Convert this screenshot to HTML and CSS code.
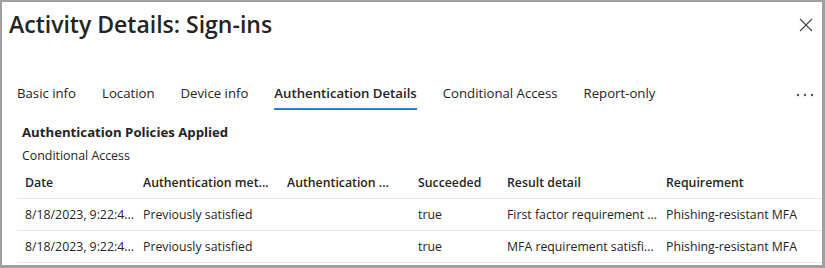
FILE: index.html
```html
<!DOCTYPE html>
<html>
<head>
<meta name="viewport" content="width=device-width, initial-scale=1">
<link rel="stylesheet" href="styles.css">
</head>
<body>
    <div class="panel">
        <div class="titleBar">
            <div class="title">Activity Details: Sign-ins</div>
            <a href="#" class="close" title="Close">
                <svg width="14" height="14" viewBox="0 0 14 14"><path d="M1 1L13 13M13 1L1 13" stroke="#444" stroke-width="1.1" fill="none"/></svg>
            </a>
        </div>
        <div class="tabs">
            <a href="#" class="tab">Basic info</a>
            <a href="#" class="tab">Location</a>
            <a href="#" class="tab">Device info</a>
            <a href="#" class="tab tabActive">Authentication Details</a>
            <a href="#" class="tab">Conditional Access</a>
            <a href="#" class="tab">Report-only</a>
            <a href="#" class="more">
                <svg width="18" height="4" viewBox="0 0 18 4"><circle cx="2" cy="2" r="1.2" fill="#555"/><circle cx="9" cy="2" r="1.2" fill="#555"/><circle cx="16" cy="2" r="1.2" fill="#555"/></svg>
            </a>
        </div>
        <div class="section">
            <div class="sectionHeading">Authentication Policies Applied</div>
            <div class="sectionSub">Conditional Access</div>
        </div>
        <table class="grid">
            <tr>
                <th class="cDate">Date</th>
                <th class="cMethod">Authentication met...</th>
                <th class="cDetail">Authentication ...</th>
                <th class="cOk">Succeeded</th>
                <th class="cResult">Result detail</th>
                <th>Requirement</th>
            </tr>
            <tr>
                <td>8/18/2023, 9:22:4...</td>
                <td>Previously satisfied</td>
                <td></td>
                <td>true</td>
                <td>First factor requirement ...</td>
                <td>Phishing-resistant MFA</td>
            </tr>
            <tr>
                <td>8/18/2023, 9:22:4...</td>
                <td>Previously satisfied</td>
                <td></td>
                <td>true</td>
                <td>MFA requirement satisfi...</td>
                <td>Phishing-resistant MFA</td>
            </tr>
        </table>
    </div>
</body>
</html>
```

FILE: styles.css
```css
html {
    margin: 0px;
    height: 100%;
}

body {
    margin: 0px;
    height: 100%;
    font-family: "Segoe UI", "Open Sans", sans-serif;
    color: #242424;
    background: #FFFFFF;
}

.panel {
    box-sizing: border-box;
    height: 268px;
    width: 825px;
    border-top: 2px solid #A0A0A0;
    border-left: 2px solid #A0A0A0;
    border-right: 3px solid #A0A0A0;
    border-bottom: 3px solid #A0A0A0;
    overflow: hidden;
}

.titleBar {
    display: flex;
    justify-content: space-between;
    align-items: flex-start;
    padding: 5px 9px 0px 7px;
    height: 47px;
}

.title {
    font-size: 23px;
    font-weight: 600;
    line-height: 34px;
}

.close {
    margin-top: 11px;
    display: block;
    line-height: 0;
}

.tabs {
    display: flex;
    align-items: flex-start;
    padding: 0px 0px 0px 15px;
    position: relative;
    margin-top: 29px;
}

.tab {
    font-size: 13.2px;
    color: #242424;
    text-decoration: none;
    line-height: 20px;
    padding-bottom: 5px;
    margin-right: 26px;
    border-bottom: 2px solid transparent;
}

.tabActive {
    font-weight: 600;
    border-bottom-color: #2B7CD3;
}

.more {
    position: absolute;
    right: 8px;
    top: 8px;
    line-height: 0;
}

.section {
    padding-left: 20px;
    margin-top: 12px;
}

.sectionHeading {
    font-size: 13.2px;
    font-weight: 700;
    line-height: 20px;
}

.sectionSub {
    font-size: 12.4px;
    line-height: 16px;
    margin-top: 6px;
}

.grid {
    border-collapse: collapse;
    margin-left: 15px;
    margin-top: 3px;
    width: 805px;
    font-size: 12.3px;
    table-layout: fixed;
}

.grid th {
    text-align: left;
    font-weight: 600;
    height: 31px;
    padding: 0px 4px 0px 8px;
    border-bottom: 1px solid #E6E6E6;
    white-space: nowrap;
    overflow: hidden;
}

.grid td {
    height: 31px;
    padding: 0px 4px 0px 8px;
    border-bottom: 1px solid #E6E6E6;
    white-space: nowrap;
    overflow: hidden;
}

.cDate { width: 106px; }
.cMethod { width: 132px; }
.cDetail { width: 119px; }
.cOk { width: 77px; }
.cResult { width: 147px; }
```
